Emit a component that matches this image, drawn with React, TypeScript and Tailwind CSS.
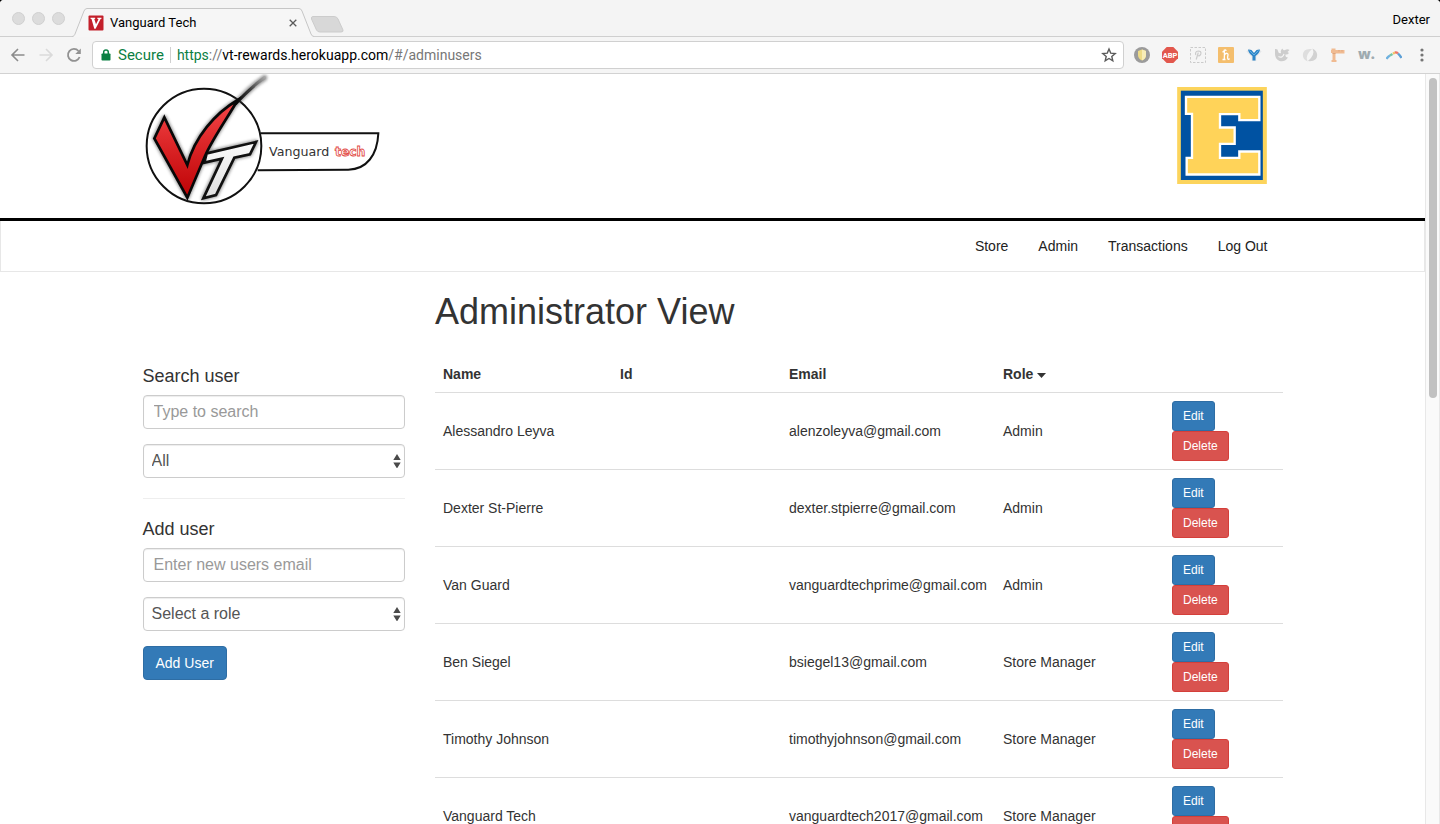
import React from "react";

const users = [
  { name: "Alessandro Leyva", email: "alenzoleyva@gmail.com", role: "Admin" },
  { name: "Dexter St-Pierre", email: "dexter.stpierre@gmail.com", role: "Admin" },
  { name: "Van Guard", email: "vanguardtechprime@gmail.com", role: "Admin" },
  { name: "Ben Siegel", email: "bsiegel13@gmail.com", role: "Store Manager" },
  { name: "Timothy Johnson", email: "timothyjohnson@gmail.com", role: "Store Manager" },
  { name: "Vanguard Tech", email: "vanguardtech2017@gmail.com", role: "Store Manager" },
];

function TabStrip() {
  return (
    <div className="flex h-[37px] shrink-0 border-b border-[#cfcfcf] bg-[#f4f4f4]">
      <div className="flex items-center gap-[7px] pl-3">
        <span className="size-[13px] rounded-full border border-[#d0d0d0] bg-[#dcdcdc]" />
        <span className="size-[13px] rounded-full border border-[#d0d0d0] bg-[#dcdcdc]" />
        <span className="size-[13px] rounded-full border border-[#d0d0d0] bg-[#dcdcdc]" />
      </div>
      <div className="relative ml-[7px] flex h-[37px] w-[242px] shrink-0 items-center gap-[6px] pt-2 pr-[17px] pl-4">
        <svg className="absolute inset-0" width="242" height="37" viewBox="0 0 242 37" aria-hidden="true">
          <path d="M0 37 V36.500 C2 36.500 2.500 35 3 34 L12 11 Q13 8.500 15 8.500 H227 Q229 8.500 230 11 L239 34 Q240 36.500 242 36.500 V37 Z" fill="#f6f6f6" />
          <path d="M0 36.500 C2 36.500 2.500 35 3 34 L12 11 Q13 8.500 15 8.500 H227 Q229 8.500 230 11 L239 34 Q240 36.500 242 36.500" fill="none" stroke="#c6c6c6" />
        </svg>
        <svg className="relative" width="16" height="16" viewBox="0 0 16 16" aria-hidden="true">
          <rect x="0.500" y="0.500" width="15" height="15" rx="1" fill="#c3202b" />
          <path d="M2.500 2.800 H7.200 V3.800 L6.300 4 L8 9.300 L10.500 4.200 L9.300 3.800 V2.800 H13.500 V3.700 L12.600 4 L7.600 13.800 H6.300 L3.500 4 L2.500 3.700 Z" fill="#fff" />
        </svg>
        <span className="relative flex-1 font-[Roboto,sans-serif] text-[13px] leading-4 text-black">Vanguard Tech</span>
        <button type="button" aria-label="Close tab" className="relative">
          <svg width="8" height="8" viewBox="0 0 8 8" aria-hidden="true">
            <path d="M0.700 0.700 L7.300 7.300 M7.300 0.700 L0.700 7.300" stroke="#5a5a5a" strokeWidth="1.300" />
          </svg>
        </button>
      </div>
      <button type="button" aria-label="New tab" className="-ml-1 self-center">
        <svg width="35" height="17" viewBox="0 0 35 17" className="mt-3" aria-hidden="true">
          <path d="M3 0.500 H24 Q27 0.500 28 3 L33 14 Q33.500 16 31 16 H10 Q7.500 16 6.500 14 L1.500 3 Q1 0.500 3 0.500 Z" fill="#d8d8d8" stroke="#cccccc" />
        </svg>
      </button>
      <button type="button" className="ml-auto pt-1 pr-[10px] font-[Roboto,sans-serif] text-[13px] text-black">
        Dexter
      </button>
    </div>
  );
}

function Extensions() {
  return (
    <div className="flex items-center gap-3">
      <svg width="16" height="16" viewBox="0 0 16 16" aria-hidden="true">
        <circle cx="8" cy="8" r="8" fill="#9b9b9b" />
        <path d="M8 2.500 L12 4 V8 Q12 11.500 8 13.500 Q4 11.500 4 8 V4 Z" fill="#eedb87" />
        <path d="M8 2.500 L12 4 V8 Q12 11.500 8 13.500 Z" fill="#f8edb7" />
      </svg>
      <svg width="16" height="16" viewBox="0 0 16 16" aria-hidden="true">
        <path d="M4.700 0 H11.300 L16 4.700 V11.300 L11.300 16 H4.700 L0 11.300 V4.700 Z" fill="#e2574d" />
        <text x="8" y="10.700" textAnchor="middle" fontFamily="Roboto, sans-serif" fontSize="7.500" fontWeight="700" fill="#fff">ABP</text>
      </svg>
      <svg width="16" height="16" viewBox="0 0 16 16" fill="none" stroke="#cbcbcb" aria-hidden="true">
        <rect x="0.500" y="0.500" width="15" height="15" strokeDasharray="2.500 1.500" />
        <path d="M6.200 12.500 L8.300 5.500 M5.800 8 Q4.700 4.500 8.300 4 Q11.500 4 10.800 7 Q9.800 9.500 7.700 8.500" strokeWidth="1.200" />
      </svg>
      <svg width="16" height="16" viewBox="0 0 16 16" aria-hidden="true">
        <rect width="16" height="16" rx="1" fill="#f4be6d" />
        <path d="M4.500 5 Q6.500 4.500 6.500 2.500 L6.300 12.500 M4.500 12.500 H7.500 M6.300 8.500 Q7 6 9 6.300 Q10.500 6.500 9.800 9 Q9.200 12 10.300 12.300 Q11 12.500 11.500 11.500 M6.500 3 Q8 2.500 8 4" fill="none" stroke="#fff" strokeWidth="1.300" />
      </svg>
      <svg width="16" height="16" viewBox="0 0 16 16" aria-hidden="true">
        <path d="M2 3 L8 9 L14 3 M8 8 V14" fill="none" stroke="#e4e6e8" strokeWidth="4.500" strokeLinejoin="round" />
        <path d="M2 2.500 L5.500 3 L8 6 L10.500 3 L14 2.500 Q13.500 6 9.500 9 V13.500 H6.500 V9 Q2.500 6 2 2.500 Z" fill="#2e86c8" />
        <path d="M3.500 3.500 L8 8 L12.500 3.500" fill="none" stroke="#63b0e2" />
      </svg>
      <svg width="16" height="16" viewBox="0 0 16 16" aria-hidden="true">
        <path d="M1 2 Q4 1.500 4 4 Q4.500 7 7 6 Q6 3.500 8.500 1.500 Q9 4 11 3 Q13.500 1.500 15.500 3 L13.500 5 L15 6 Q13.500 8 11.500 7.500 Q11 10.500 14 10.500 Q10.500 15.500 5.500 14 Q1 12 1 7 Z" fill="#cdcdcd" />
        <path d="M4.500 9.500 Q8.500 11.500 10 7" fill="none" stroke="#f5f5f5" strokeWidth="1.200" />
      </svg>
      <svg width="16" height="16" viewBox="0 0 16 16" fill="none" aria-hidden="true">
        <path d="M10 2 Q1 1 0.800 8 Q1 12.500 5.500 14.500 Q2.500 8.500 10 2 Z" fill="#dedede" />
        <path d="M6 14 Q15 15 15.200 8 Q15 3.500 10.500 1.500 Q13.500 7.500 6 14 Z" fill="#d2d2d2" />
      </svg>
      <svg width="16" height="16" viewBox="0 0 16 16" aria-hidden="true">
        <path d="M1.500 1.500 H5.500 V3 H14.500 V6.500 H5.500 V13 H6.500 V15 H1.500 V13 H2.500 V6 H1 V3 H1.500 Z" fill="#f0bb92" />
        <path d="M2.500 6.500 H5.500 M9 3 V4.500 M12 3 V4.500" stroke="#dda57c" />
      </svg>
      <svg width="16" height="16" viewBox="0 0 16 16" className="overflow-visible" aria-hidden="true">
        <text x="0" y="12" fontFamily="Open Sans, sans-serif" fontSize="14" fontWeight="800" fill="#9fabb0">w.</text>
      </svg>
      <svg width="16" height="16" viewBox="0 0 16 16" fill="none" strokeWidth="2.400" aria-hidden="true">
        <path d="M0.500 12 Q2 9.500 4 8.500" stroke="#6eb1df" />
        <path d="M4 8.500 L6.500 7" stroke="#76c5a3" />
        <path d="M7 6.700 L9 5.500" stroke="#f4c266" />
        <path d="M9 5.500 Q10.500 5 12 6.500" stroke="#ee7567" />
        <path d="M12 6.500 Q14 8.500 15.500 11" stroke="#5d9fd6" />
      </svg>
      <svg width="16" height="16" viewBox="0 0 16 16" fill="#757575" aria-hidden="true">
        <circle cx="8" cy="3" r="1.600" />
        <circle cx="8" cy="8" r="1.600" />
        <circle cx="8" cy="13" r="1.600" />
      </svg>
    </div>
  );
}

function Toolbar() {
  return (
    <div className="flex h-[37px] shrink-0 items-center gap-[10px] border-b border-[#d2d2d2] bg-[#f5f5f5] px-[10px]">
      <div className="flex gap-3">
        <button type="button" aria-label="Back">
          <svg width="16" height="16" viewBox="0 0 16 16" fill="none" stroke="#8c8c8c" strokeWidth="1.600" aria-hidden="true">
            <path d="M14.500 8 H2.500 M8 2 L2 8 L8 14" />
          </svg>
        </button>
        <button type="button" aria-label="Forward">
          <svg width="16" height="16" viewBox="0 0 16 16" fill="none" stroke="#dadada" strokeWidth="1.600" aria-hidden="true">
            <path d="M1.500 8 H13.500 M8 2 L14 8 L8 14" />
          </svg>
        </button>
        <button type="button" aria-label="Reload">
          <svg width="16" height="16" viewBox="0 0 16 16" aria-hidden="true">
            <path d="M13.600 10 A6 6 0 1 1 12.500 4" fill="none" stroke="#929292" strokeWidth="1.800" />
            <path d="M14.800 1.500 V7 H9.300 Z" fill="#929292" />
          </svg>
        </button>
      </div>
      <div className="flex h-7 flex-1 items-center rounded border border-[#d0d0d0] bg-white pr-[6px] pl-2 font-[Roboto,sans-serif] leading-5 whitespace-pre">
        <svg width="10" height="12" viewBox="0 0 10 12" aria-hidden="true">
          <rect x="0.500" y="4.500" width="9" height="7" rx="0.800" fill="#0b8043" />
          <path d="M2.700 5 V3.200 Q2.700 1 5 1 Q7.300 1 7.300 3.200 V5" fill="none" stroke="#0b8043" strokeWidth="1.500" />
        </svg>
        <span className="ml-[7px] text-[15px] text-[#0b8043]">Secure</span>
        <span className="mx-[6px] h-4 w-px bg-[#d0d0d0]" />
        <span className="flex-1 text-sm text-black">
          <span className="text-[#0b8043]">https</span>
          <span className="text-[#777777]">://</span>vt-rewards.herokuapp.com<span className="text-[#777777]">/#/adminusers</span>
        </span>
        <button type="button" aria-label="Bookmark this page">
          <svg width="16" height="16" viewBox="0 0 16 16" fill="none" stroke="#5a5a5a" strokeWidth="1.400" aria-hidden="true">
            <path d="M8 2 L9.700 6.100 L14.200 6.500 L10.800 9.400 L11.800 13.800 L8 11.500 L4.200 13.800 L5.200 9.400 L1.800 6.500 L6.300 6.100 Z" />
          </svg>
        </button>
      </div>
      <Extensions />
    </div>
  );
}

function VanguardLogo() {
  const v = "M88 142 L157 285 C178 202 240 130 308 90 C280 140 236 200 210 258 L157 383 L58 205 Z";
  const t = "M215 250 L363 216 L345 253 L298 263 L243 375 L205 385 L261 266 L208 278 Z";
  const tail = "M300 97 C332 61 365 33 388 18 Q396 20 391 28 C365 44 335 72 304 106 Z";
  return (
    <svg width="240" height="134" viewBox="24 12 720 402" role="img" aria-label="Vanguard Tech">
      <defs>
        <linearGradient id="vRed" x1="0" y1="0" x2="0" y2="1">
          <stop offset="0" stopColor="#f5484a" />
          <stop offset="0.450" stopColor="#dc2628" />
          <stop offset="1" stopColor="#bd0205" />
        </linearGradient>
        <linearGradient id="tGrey" x1="0" y1="0" x2="0" y2="1">
          <stop offset="0" stopColor="#fbfbfb" />
          <stop offset="1" stopColor="#dedede" />
        </linearGradient>
        <linearGradient id="tailGrey" x1="0" y1="1" x2="1" y2="0">
          <stop offset="0" stopColor="#000000" />
          <stop offset="0.500" stopColor="#3a3a3a" />
          <stop offset="1" stopColor="#b0b0b0" />
        </linearGradient>
        <filter id="soft" x="-20%" y="-20%" width="140%" height="140%">
          <feGaussianBlur stdDeviation="4" />
        </filter>
      </defs>
      <circle cx="207" cy="228" r="172" fill="#fff" stroke="#111" strokeWidth="6" />
      <path d="M376 190 H730 C727 255 695 298 640 299 L368 301" fill="none" stroke="#111" strokeWidth="6" />
      <g filter="url(#soft)" opacity="0.550" stroke="#444" strokeWidth="14" fill="#444" strokeLinejoin="round">
        <path d={v} />
        <path d={t} />
        <path d={tail} strokeWidth="8" />
      </g>
      <path d={tail} fill="url(#tailGrey)" />
      <path d={t} fill="url(#tGrey)" stroke="#111" strokeWidth="8" />
      <path d={v} fill="url(#vRed)" stroke="#080808" strokeWidth="8" />
      <text x="402" y="258" fontFamily="DejaVu Sans, sans-serif" fontSize="38" fill="#333">Vanguard</text>
      <text x="600" y="258" fontFamily="DejaVu Sans, sans-serif" fontSize="37" fontWeight="700" fill="#fff" stroke="#e2483f" strokeWidth="2.500">tech</text>
    </svg>
  );
}

function SchoolLogo() {
  const letter =
    "M66 54 H279 V117 H226 V99 H161 V146 H205 V188 H161 V237 H226 V218 H279 V280 H68 V237 H84 V98 H66 Z";
  return (
    <svg width="90" height="97" viewBox="36 21 269 291" role="img" aria-label="E">
      <rect x="36" y="21" width="269" height="291" fill="#fcd45c" />
      <rect x="47" y="32" width="246" height="268" fill="#0052a2" />
      <path d={letter} fill="#ffd359" stroke="#fff" strokeWidth="14" />
      <path d={letter} fill="#ffd359" />
    </svg>
  );
}

const fieldClass =
  "block h-[34px] w-full appearance-none rounded border border-[#cccccc] bg-white text-base text-[#555555] shadow-[inset_0_1px_1px_rgba(0,0,0,0.075)] placeholder:text-[#999999]";

function RoleSelect({ label, options }: { label: string; options: string[] }) {
  return (
    <div className="relative mt-[15px]">
      <select aria-label={label} className={`${fieldClass} pr-6 pl-2`}>
        {options.map((o) => (
          <option key={o}>{o}</option>
        ))}
      </select>
      <svg className="pointer-events-none absolute top-[10px] right-1" width="8" height="14" viewBox="0 0 8 14" fill="#4a4a4a" aria-hidden="true">
        <path d="M4 0 L7.700 6 H0.300 Z M4 14.500 L7.700 8.500 H0.300 Z" />
      </svg>
    </div>
  );
}

function Sidebar() {
  return (
    <aside className="w-1/4 shrink-0 px-[15px] pt-[94px]">
      <label htmlFor="search" className="block text-lg leading-5">Search user</label>
      <input id="search" type="text" placeholder="Type to search" className={`${fieldClass} mt-[9px] px-[10px]`} />
      <RoleSelect label="Filter by role" options={["All", "Admin", "Store Manager"]} />
      <hr className="my-5 border-[#eeeeee]" />
      <label htmlFor="email" className="block text-lg leading-5">Add user</label>
      <input id="email" type="email" placeholder="Enter new users email" className={`${fieldClass} mt-[9px] px-[10px]`} />
      <RoleSelect label="Role of new user" options={["Select a role", "Admin", "Store Manager"]} />
      <button type="button" className="mt-[15px] h-[34px] rounded border border-[#2e6da4] bg-[#337ab7] px-3 text-sm text-white">
        Add User
      </button>
    </aside>
  );
}

function UserTable() {
  return (
    <table className="mt-6 w-full table-fixed text-left text-sm">
      <colgroup>
        <col className="w-[177px]" />
        <col className="w-[169px]" />
        <col className="w-[214px]" />
        <col className="w-[169px]" />
        <col />
      </colgroup>
      <thead>
        <tr>
          <th className="p-2 font-bold">Name</th>
          <th className="p-2 font-bold">Id</th>
          <th className="p-2 font-bold">Email</th>
          <th className="p-2 font-bold">
            <button type="button" className="flex items-center gap-1 leading-5 font-bold">
              Role
              <svg width="9" height="5" viewBox="0 0 9 5" fill="#333" className="mt-[3px]" aria-hidden="true">
                <path d="M0 0 H9 L4.500 5 Z" />
              </svg>
            </button>
          </th>
          <th className="p-2" aria-label="Actions" />
        </tr>
      </thead>
      <tbody>
        {users.map((u) => (
          <tr key={u.email} className="border-t border-[#dddddd]">
            <td className="p-2">{u.name}</td>
            <td className="p-2" />
            <td className="p-2 whitespace-nowrap">{u.email}</td>
            <td className="p-2">{u.role}</td>
            <td className="p-2">
              <div className="flex flex-col items-start">
                <button type="button" className="h-[30px] rounded-[3px] border border-[#2e6da4] bg-[#337ab7] px-[10px] text-xs text-white">Edit</button>
                <button type="button" className="h-[30px] rounded-[3px] border border-[#d43f3a] bg-[#d9534f] px-[10px] text-xs text-white">Delete</button>
              </div>
            </td>
          </tr>
        ))}
      </tbody>
    </table>
  );
}

function RewardsPage() {
  return (
    <div className="min-w-0 flex-1 overflow-hidden bg-white font-['Liberation_Sans',Arial,sans-serif] text-[#333333]">
      <header className="border-b-[3px] border-black">
        <div className="mx-auto flex h-36 max-w-[1170px] items-start justify-between px-[15px]">
          <VanguardLogo />
          <div className="pt-[13px] pr-4"><SchoolLogo /></div>
        </div>
      </header>
      <nav className="border-x border-b border-[#e7e7e7]">
        <div className="mx-auto flex h-[50px] max-w-[1170px] items-center justify-end gap-[30px] px-[30px] text-sm text-[#222222]">
          <a href="#/store">Store</a>
          <a href="#/admin">Admin</a>
          <a href="#/transactions">Transactions</a>
          <a href="#/logout">Log Out</a>
        </div>
      </nav>
      <main className="mx-auto flex max-w-[1170px]">
        <Sidebar />
        <section className="min-w-0 flex-1 px-[15px] pt-5">
          <h1 className="text-4xl leading-10 font-normal">Administrator View</h1>
          <UserTable />
        </section>
      </main>
    </div>
  );
}

export default function App() {
  return (
    <div className="bg-black">
      <div className="flex h-screen flex-col overflow-hidden rounded-t-[4px] bg-white">
        <TabStrip />
        <Toolbar />
        <div className="flex min-h-0 flex-1">
          <RewardsPage />
          <div className="w-[15px] shrink-0 border-x border-[#e8e8e8] bg-[#fafafa] px-[3px] pt-1">
            <div className="h-80 w-2 rounded-full bg-[#c1c1c1]" />
          </div>
        </div>
      </div>
    </div>
  );
}
